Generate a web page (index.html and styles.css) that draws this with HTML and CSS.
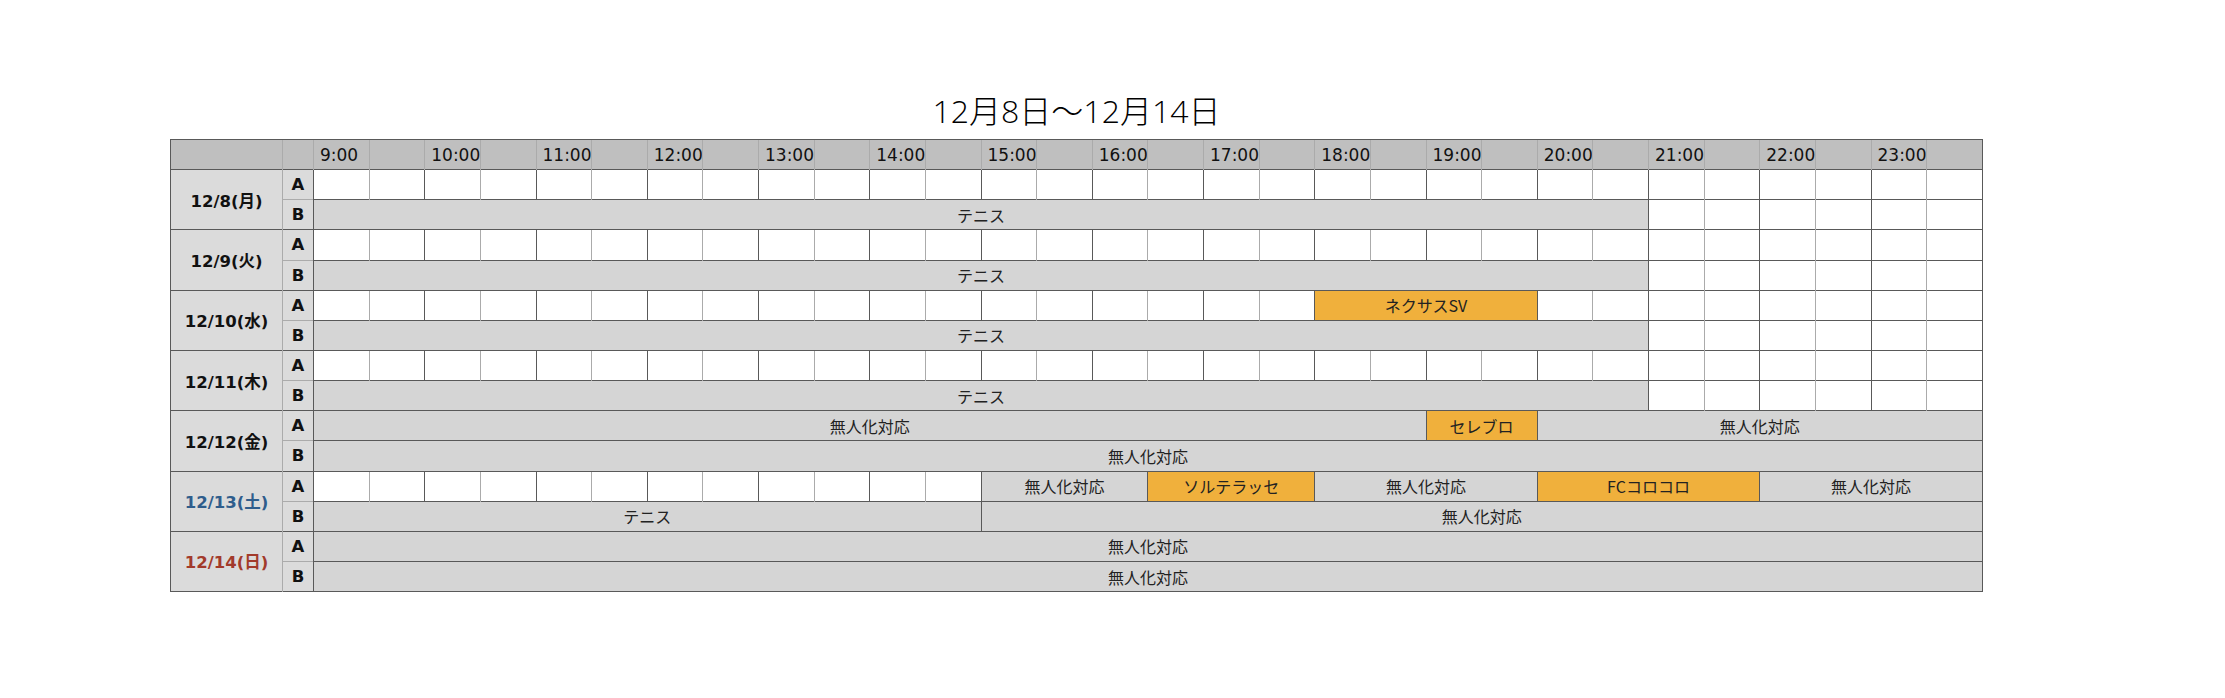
FILE: index.html
```html
<!DOCTYPE html>
<html lang="ja">
<head>
<meta charset="utf-8">
<title>12月8日〜12月14日</title>
<link rel="stylesheet" href="styles.css">
</head>
<body>
<div class="page">
  <h1 class="title">12月8日〜12月14日</h1>
  <table class="sched">
    <colgroup>
      <col class="c-day"><col class="c-ab">
      <col span="30">
    </colgroup>
    <thead>
      <tr class="hd">
        <th class="corner"></th><th class="hab"></th>
        <th class="hr">9:00</th><th></th>
        <th class="hr">10:00</th><th></th>
        <th class="hr">11:00</th><th></th>
        <th class="hr">12:00</th><th></th>
        <th class="hr">13:00</th><th></th>
        <th class="hr">14:00</th><th></th>
        <th class="hr">15:00</th><th></th>
        <th class="hr">16:00</th><th></th>
        <th class="hr">17:00</th><th></th>
        <th class="hr">18:00</th><th></th>
        <th class="hr">19:00</th><th></th>
        <th class="hr">20:00</th><th></th>
        <th class="hr">21:00</th><th></th>
        <th class="hr">22:00</th><th></th>
        <th class="hr">23:00</th><th></th>
      </tr>
    </thead>
    <tbody>
      <!-- 12/8 -->
      <tr class="ra">
        <th class="day" rowspan="2">12/8(月)</th><th class="ab">A</th>
        <td class="h"></td><td class="m"></td><td class="h"></td><td class="m"></td><td class="h"></td><td class="m"></td><td class="h"></td><td class="m"></td><td class="h"></td><td class="m"></td>
        <td class="h"></td><td class="m"></td><td class="h"></td><td class="m"></td><td class="h"></td><td class="m"></td><td class="h"></td><td class="m"></td><td class="h"></td><td class="m"></td>
        <td class="h"></td><td class="m"></td><td class="h"></td><td class="m"></td><td class="h"></td><td class="m"></td><td class="h"></td><td class="m"></td><td class="h"></td><td class="m"></td>
      </tr>
      <tr class="rb">
        <th class="ab">B</th>
        <td class="h ev g" colspan="24">テニス</td>
        <td class="h"></td><td class="m"></td><td class="h"></td><td class="m"></td><td class="h"></td><td class="m"></td>
      </tr>
      <!-- 12/9 -->
      <tr class="ra">
        <th class="day" rowspan="2">12/9(火)</th><th class="ab">A</th>
        <td class="h"></td><td class="m"></td><td class="h"></td><td class="m"></td><td class="h"></td><td class="m"></td><td class="h"></td><td class="m"></td><td class="h"></td><td class="m"></td>
        <td class="h"></td><td class="m"></td><td class="h"></td><td class="m"></td><td class="h"></td><td class="m"></td><td class="h"></td><td class="m"></td><td class="h"></td><td class="m"></td>
        <td class="h"></td><td class="m"></td><td class="h"></td><td class="m"></td><td class="h"></td><td class="m"></td><td class="h"></td><td class="m"></td><td class="h"></td><td class="m"></td>
      </tr>
      <tr class="rb">
        <th class="ab">B</th>
        <td class="h ev g" colspan="24">テニス</td>
        <td class="h"></td><td class="m"></td><td class="h"></td><td class="m"></td><td class="h"></td><td class="m"></td>
      </tr>
      <!-- 12/10 -->
      <tr class="ra">
        <th class="day" rowspan="2">12/10(水)</th><th class="ab">A</th>
        <td class="h"></td><td class="m"></td><td class="h"></td><td class="m"></td><td class="h"></td><td class="m"></td><td class="h"></td><td class="m"></td><td class="h"></td><td class="m"></td>
        <td class="h"></td><td class="m"></td><td class="h"></td><td class="m"></td><td class="h"></td><td class="m"></td><td class="h"></td><td class="m"></td>
        <td class="h ev o" colspan="4">ネクサスSV</td>
        <td class="h"></td><td class="m"></td><td class="h"></td><td class="m"></td><td class="h"></td><td class="m"></td><td class="h"></td><td class="m"></td>
      </tr>
      <tr class="rb">
        <th class="ab">B</th>
        <td class="h ev g" colspan="24">テニス</td>
        <td class="h"></td><td class="m"></td><td class="h"></td><td class="m"></td><td class="h"></td><td class="m"></td>
      </tr>
      <!-- 12/11 -->
      <tr class="ra">
        <th class="day" rowspan="2">12/11(木)</th><th class="ab">A</th>
        <td class="h"></td><td class="m"></td><td class="h"></td><td class="m"></td><td class="h"></td><td class="m"></td><td class="h"></td><td class="m"></td><td class="h"></td><td class="m"></td>
        <td class="h"></td><td class="m"></td><td class="h"></td><td class="m"></td><td class="h"></td><td class="m"></td><td class="h"></td><td class="m"></td><td class="h"></td><td class="m"></td>
        <td class="h"></td><td class="m"></td><td class="h"></td><td class="m"></td><td class="h"></td><td class="m"></td><td class="h"></td><td class="m"></td><td class="h"></td><td class="m"></td>
      </tr>
      <tr class="rb">
        <th class="ab">B</th>
        <td class="h ev g" colspan="24">テニス</td>
        <td class="h"></td><td class="m"></td><td class="h"></td><td class="m"></td><td class="h"></td><td class="m"></td>
      </tr>
      <!-- 12/12 -->
      <tr class="ra">
        <th class="day" rowspan="2">12/12(金)</th><th class="ab">A</th>
        <td class="h ev g" colspan="20">無人化対応</td>
        <td class="h ev o" colspan="2">セレブロ</td>
        <td class="h ev g" colspan="8">無人化対応</td>
      </tr>
      <tr class="rb">
        <th class="ab">B</th>
        <td class="h ev g" colspan="30">無人化対応</td>
      </tr>
      <!-- 12/13 -->
      <tr class="ra">
        <th class="day sat" rowspan="2">12/13(土)</th><th class="ab">A</th>
        <td class="h"></td><td class="m"></td><td class="h"></td><td class="m"></td><td class="h"></td><td class="m"></td><td class="h"></td><td class="m"></td><td class="h"></td><td class="m"></td><td class="h"></td><td class="m"></td>
        <td class="h ev g" colspan="3">無人化対応</td>
        <td class="h ev o" colspan="3">ソルテラッセ</td>
        <td class="h ev g" colspan="4">無人化対応</td>
        <td class="h ev o" colspan="4">FCコロコロ</td>
        <td class="h ev g" colspan="4">無人化対応</td>
      </tr>
      <tr class="rb">
        <th class="ab">B</th>
        <td class="h ev g" colspan="12">テニス</td>
        <td class="h ev g" colspan="18">無人化対応</td>
      </tr>
      <!-- 12/14 -->
      <tr class="ra">
        <th class="day sun" rowspan="2">12/14(日)</th><th class="ab">A</th>
        <td class="h ev g" colspan="30">無人化対応</td>
      </tr>
      <tr class="rb">
        <th class="ab">B</th>
        <td class="h ev g" colspan="30">無人化対応</td>
      </tr>
    </tbody>
  </table>
</div>
</body>
</html>
```
FILE: styles.css
```css
* { box-sizing: border-box; }

body {
  margin: 0;
  background: #ffffff;
  color: #111111;
  font-family: "DejaVu Sans", "Noto Sans CJK JP", sans-serif;
}

.page {
  padding: 90px 0 0 170px;
}

.title {
  width: 1813px;
  margin: 0 0 7px;
  text-align: center;
  font-family: "Open Sans", "Noto Sans CJK JP", sans-serif;
  font-size: 32px;
  line-height: 42px;
  font-weight: 300;
  color: #000000;
}

.sched {
  width: 1813px;
  table-layout: fixed;
  border-collapse: collapse;
  border-right: 1px solid #595959;
  border-bottom: 1px solid #595959;
}

.c-day { width: 112px; }
.c-ab { width: 31px; }

.sched tr { height: 30.15px; }

.sched th,
.sched td {
  padding: 0;
  border-top: 1px solid #595959;
  border-left: 1px solid #ababab;
  background: #ffffff;
}

/* header */
.hd th {
  background: #bfbfbf;
  font-size: 17px;
  font-weight: 400;
  text-align: left;
  white-space: nowrap;
  overflow: hidden;
}
.hd th.corner { border-left-color: #595959; }
.hd th.hr { padding-left: 6px; }

/* day labels */
.sched th.day {
  background: #dbdbdb;
  border-left-color: #595959;
  font-size: 16.5px;
  font-weight: 700;
  text-align: center;
}
.sched th.day.sat { color: #2f5d8c; }
.sched th.day.sun { color: #a23a2b; }

.sched th.ab {
  background: #dbdbdb;
  font-size: 16.5px;
  font-weight: 700;
  text-align: center;
}
.rb th.ab { border-top-color: #ababab; }

/* time cells */
.sched td.h { border-left-color: #595959; }
.sched td.m { border-left-color: #ababab; }

.ev {
  text-align: center;
  font-family: "Noto Sans CJK JP", sans-serif;
  font-size: 16px;
  color: #222222;
  white-space: nowrap;
}
.sched td.g { background: #d5d5d5; }
.sched td.o { background: #f0b03c; }
```
